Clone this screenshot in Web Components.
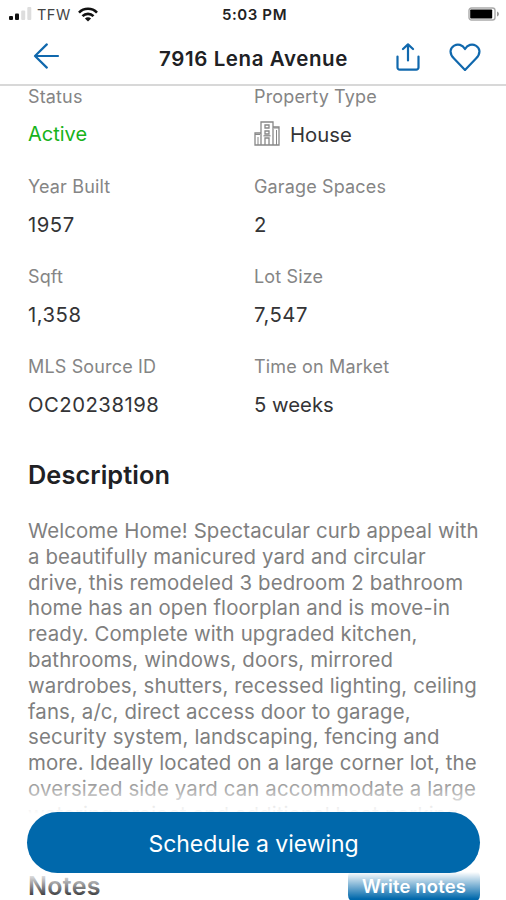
<!DOCTYPE html>
<html lang="en">
<head>
<meta charset="utf-8">
<title>7916 Lena Avenue</title>
<style>
  html, body {
    margin: 0;
    height: 900px;
    overflow: hidden;
    background: #fff;
    font-family: Inter, "Liberation Sans", sans-serif;
    color: #343436;
  }
</style>
</head>
<body>
<listing-screen>
  <status-bar slot="top" carrier="TFW" time="5:03 PM"></status-bar>
  <nav-bar slot="top">7916 Lena Avenue</nav-bar>

  <facts-grid>
    <fact-item label="Status" tone="active">Active</fact-item>
    <fact-item label="Property Type"><building-icon slot="icon"></building-icon>House</fact-item>
    <fact-item label="Year Built" numeric>1957</fact-item>
    <fact-item label="Garage Spaces" numeric>2</fact-item>
    <fact-item label="Sqft" numeric>1,358</fact-item>
    <fact-item label="Lot Size" numeric>7,547</fact-item>
    <fact-item label="MLS Source ID" numeric>OC20238198</fact-item>
    <fact-item label="Time on Market">5 weeks</fact-item>
  </facts-grid>

  <text-section heading="Description">Welcome Home! Spectacular curb appeal with
a beautifully manicured yard and circular
drive, this remodeled 3 bedroom 2 bathroom
home has an open floorplan and is move-in
ready. Complete with upgraded kitchen,
bathrooms, windows, doors, mirrored
wardrobes, shutters, recessed lighting, ceiling
fans, a/c, direct access door to garage,
security system, landscaping, fencing and
more. Ideally located on a large corner lot, the
oversized side yard can accommodate a large
watering project and additional boat parking</text-section>

  <notes-row heading="Notes">Write notes</notes-row>
  <action-dock slot="dock">Schedule a viewing</action-dock>
</listing-screen>

<script>
class BaseElement extends HTMLElement {
  constructor() {
    super();
    this.shadow = this.attachShadow({ mode: 'open' });
  }

  connectedCallback() {
    this.shadow.innerHTML = `<style>${this.css}</style>${this.render()}`;
  }
}

class ListingScreen extends BaseElement {
  css = `
  :host {
    display: flex;
    flex-direction: column;
    position: relative;
    height: 900px;
    overflow: hidden;
  }
  main {
    flex: 1;
    min-height: 0;
    overflow: hidden;
    padding: 0 26px 0 28px;
  }
  `;

  render() {
    return `
    <slot name="top"></slot>
    <main><slot></slot></main>
    <slot name="dock"></slot>`;
  }
}

class StatusBar extends BaseElement {
  css = `
  :host {
    display: grid;
    grid-template-columns: 1fr auto 1fr;
    align-items: center;
    flex: none;
    height: 28px;
    padding: 0 6px 0 9px;
    font-size: 14.5px;
    color: #111;
  }
  .left {
    display: flex;
    align-items: center;
  }
  .carrier {
    margin: 0 7px 0 5px;
    color: #444;
    letter-spacing: 0.5px;
  }
  .time {
    font-weight: 600;
    font-size: 15px;
    letter-spacing: 0.6px;
    color: #222;
  }
  svg { display: block; }
  .battery { justify-self: end; margin-bottom: 1px; }
  `;

  render() {
    return `
    <div class="left">
      <svg width="23" height="14" viewBox="0 0 23 14">
        <rect x="0" y="9" width="4" height="4" rx="1" fill="#111"/>
        <rect x="6" y="6.5" width="4" height="6.5" rx="1" fill="#111"/>
        <rect x="12.2" y="3.5" width="4" height="9.5" rx="1" fill="#ddd"/>
        <rect x="18.3" y="0" width="4" height="13" rx="1" fill="#ddd"/>
      </svg>
      <span class="carrier">${this.getAttribute('carrier')}</span>
      <svg width="20" height="15" viewBox="0 0 20 15" fill="none" stroke="#111" stroke-width="2.6">
        <path d="M1 5.6a12.6 12.6 0 0 1 18 0"/>
        <path d="M4.5 9.2a7.7 7.7 0 0 1 11 0"/>
        <path d="M10 14.6 6.9 11.5a4.4 4.4 0 0 1 6.2 0z" fill="#111" stroke="none"/>
      </svg>
    </div>
    <span class="time">${this.getAttribute('time')}</span>
    <svg class="battery" width="32" height="14" viewBox="0 0 32 14">
      <rect x="1" y="1" width="26" height="12" rx="2.5" fill="#fff" stroke="#aaa" stroke-width="1.4"/>
      <rect x="2.2" y="2.4" width="22" height="9.2" rx="0.8" fill="#000"/>
      <path d="M29 4.5c2.6 1 2.6 4 0 5z" fill="#999"/>
    </svg>`;
  }
}

class NavBar extends BaseElement {
  css = `
  :host {
    display: flex;
    align-items: center;
    flex: none;
    box-sizing: border-box;
    height: 58px;
    padding: 0 25px 0 33px;
    border-bottom: 2px solid #d8d8d8;
    color: #1068ad;
  }
  svg {
    display: block;
    flex: none;
    fill: none;
    stroke: currentColor;
    stroke-width: 2.2;
    stroke-linecap: round;
    stroke-linejoin: round;
  }
  h1 {
    flex: 1;
    margin: 4px 0 0 51px;
    text-align: center;
    font-size: 20.5px;
    font-weight: 600;
    letter-spacing: 0.6px;
    color: #202124;
    white-space: nowrap;
  }
  .actions {
    display: flex;
    align-items: center;
    gap: 29px;
  }
  .actions svg {
    margin-top: 2px;
  }
  `;

  render() {
    return `
    <svg width="27" height="26" viewBox="0 0 27 26"><path d="M25 13H2M13.8 1.4 2 13l11.8 11.6"/></svg>
    <h1><slot></slot></h1>
    <div class="actions">
      <svg width="24" height="28" viewBox="0 0 24 28">
        <path d="M1.5 13.5v11a2.2 2.2 0 0 0 2.2 2.2h16.6a2.2 2.2 0 0 0 2.2-2.2v-11M12 17.5V1.5M7 6l5-4.6L17 6"/>
      </svg>
      <svg width="32" height="28" viewBox="0 0 32 28">
        <path d="M16 27 5 15.6C-.2 10.2 1 5 5.2 2.6 8.8.6 13.5 1.6 16 6 18.5 1.6 23.2.6 26.8 2.6 31 5 32.2 10.2 27 15.6z"/>
      </svg>
    </div>`;
  }
}

class FactsGrid extends BaseElement {
  css = `
  :host {
    display: grid;
    grid-template-columns: 226px 1fr;
    grid-auto-rows: 90px;
  }
  `;

  render() {
    return '<slot></slot>';
  }
}

class FactItem extends BaseElement {
  css = `
  :host {
    display: block;
    white-space: nowrap;
  }
  .label {
    font-size: 18px;
    line-height: 22px;
    color: #858585;
    letter-spacing: 0.15px;
  }
  .value {
    display: flex;
    align-items: center;
    gap: 10px;
    height: 26px;
    margin-top: 13px;
    font-size: 20.3px;
  }
  ::slotted([slot="icon"]) { flex: none; }
  :host([numeric]) .value { letter-spacing: 0.5px; }
  :host([tone="active"]) .value {
    font-size: 20px;
    color: #17b31b;
  }
  `;

  render() {
    return `
    <div class="label">${this.getAttribute('label')}</div>
    <div class="value"><slot name="icon"></slot><span><slot></slot></span></div>`;
  }
}

class BuildingIcon extends BaseElement {
  css = `
  :host {
    display: block;
    margin-bottom: 2px;
  }
  svg { display: block; }
  `;

  render() {
    return `
    <svg width="26" height="25" viewBox="0 0 26 25" fill="none" stroke="#888" stroke-width="1.3">
      <path d="M7 24V1h12v23M7 12H1v12h24V6h-6"/>
      <path d="M1 13.5h5M20 7h5M4 16v8M22.5 9v15" stroke-width="1"/>
      <path d="M11 4h4v3h-4zM11 10h4v3h-4zM11 24v-7h4v7"/>
      <path d="M9.5 14.8h7"/>
    </svg>`;
  }
}

class TextSection extends BaseElement {
  css = `
  :host {
    display: block;
    margin-top: 13px;
  }
  h2 {
    margin: 0;
    font-size: 25.3px;
    line-height: 32px;
    font-weight: 600;
    letter-spacing: 0.1px;
    color: #202124;
  }
  p {
    margin: 27px 0 0;
    font-size: 20.4px;
    line-height: 25.8px;
    letter-spacing: 0.12px;
    color: #7f7f7f;
    white-space: pre;
  }
  `;

  render() {
    return `<h2>${this.getAttribute('heading')}</h2><p><slot></slot></p>`;
  }
}

class NotesRow extends BaseElement {
  css = `
  :host {
    display: flex;
    justify-content: space-between;
    align-items: center;
    margin-top: 45px;
    height: 26px;
  }
  h2 {
    margin: 0;
    font-size: 25px;
    line-height: 26px;
    font-weight: 600;
    letter-spacing: 0.3px;
    color: #202124;
  }
  button {
    width: 132px;
    height: 34px;
    padding: 0;
    border: 0;
    border-radius: 8px;
    background: #0068ab;
    color: #fff;
    font: 600 18.4px/24px Inter, "Liberation Sans", sans-serif;
    letter-spacing: 0.2px;
  }
  `;

  render() {
    return `<h2>${this.getAttribute('heading')}</h2><button><slot></slot></button>`;
  }
}

class ActionDock extends BaseElement {
  /* Fades the scrolled page out above and below the button */
  css = `
  :host {
    display: block;
    position: absolute;
    left: 0;
    right: 0;
    bottom: 0;
    padding: 42px 26px 27px 27px;
    background: linear-gradient(
      rgba(255, 255, 255, 0) 0,
      rgba(255, 255, 255, 0.35) 20px,
      rgba(255, 255, 255, 0.8) 34px,
      #fff 44px,
      #fff 102px,
      rgba(255, 255, 255, 0.85) 106px,
      rgba(255, 255, 255, 0) 129px
    );
  }
  button {
    display: block;
    width: 100%;
    height: 61px;
    padding: 2px 0 0;
    border: 0;
    border-radius: 31px;
    background: #0068ab;
    color: #fff;
    font: 400 23px Inter, "Liberation Sans", sans-serif;
    letter-spacing: -0.05px;
  }
  `;

  render() {
    return '<button><slot></slot></button>';
  }
}

customElements.define('listing-screen', ListingScreen);
customElements.define('status-bar', StatusBar);
customElements.define('nav-bar', NavBar);
customElements.define('facts-grid', FactsGrid);
customElements.define('fact-item', FactItem);
customElements.define('building-icon', BuildingIcon);
customElements.define('text-section', TextSection);
customElements.define('notes-row', NotesRow);
customElements.define('action-dock', ActionDock);
</script>
</body>
</html>
